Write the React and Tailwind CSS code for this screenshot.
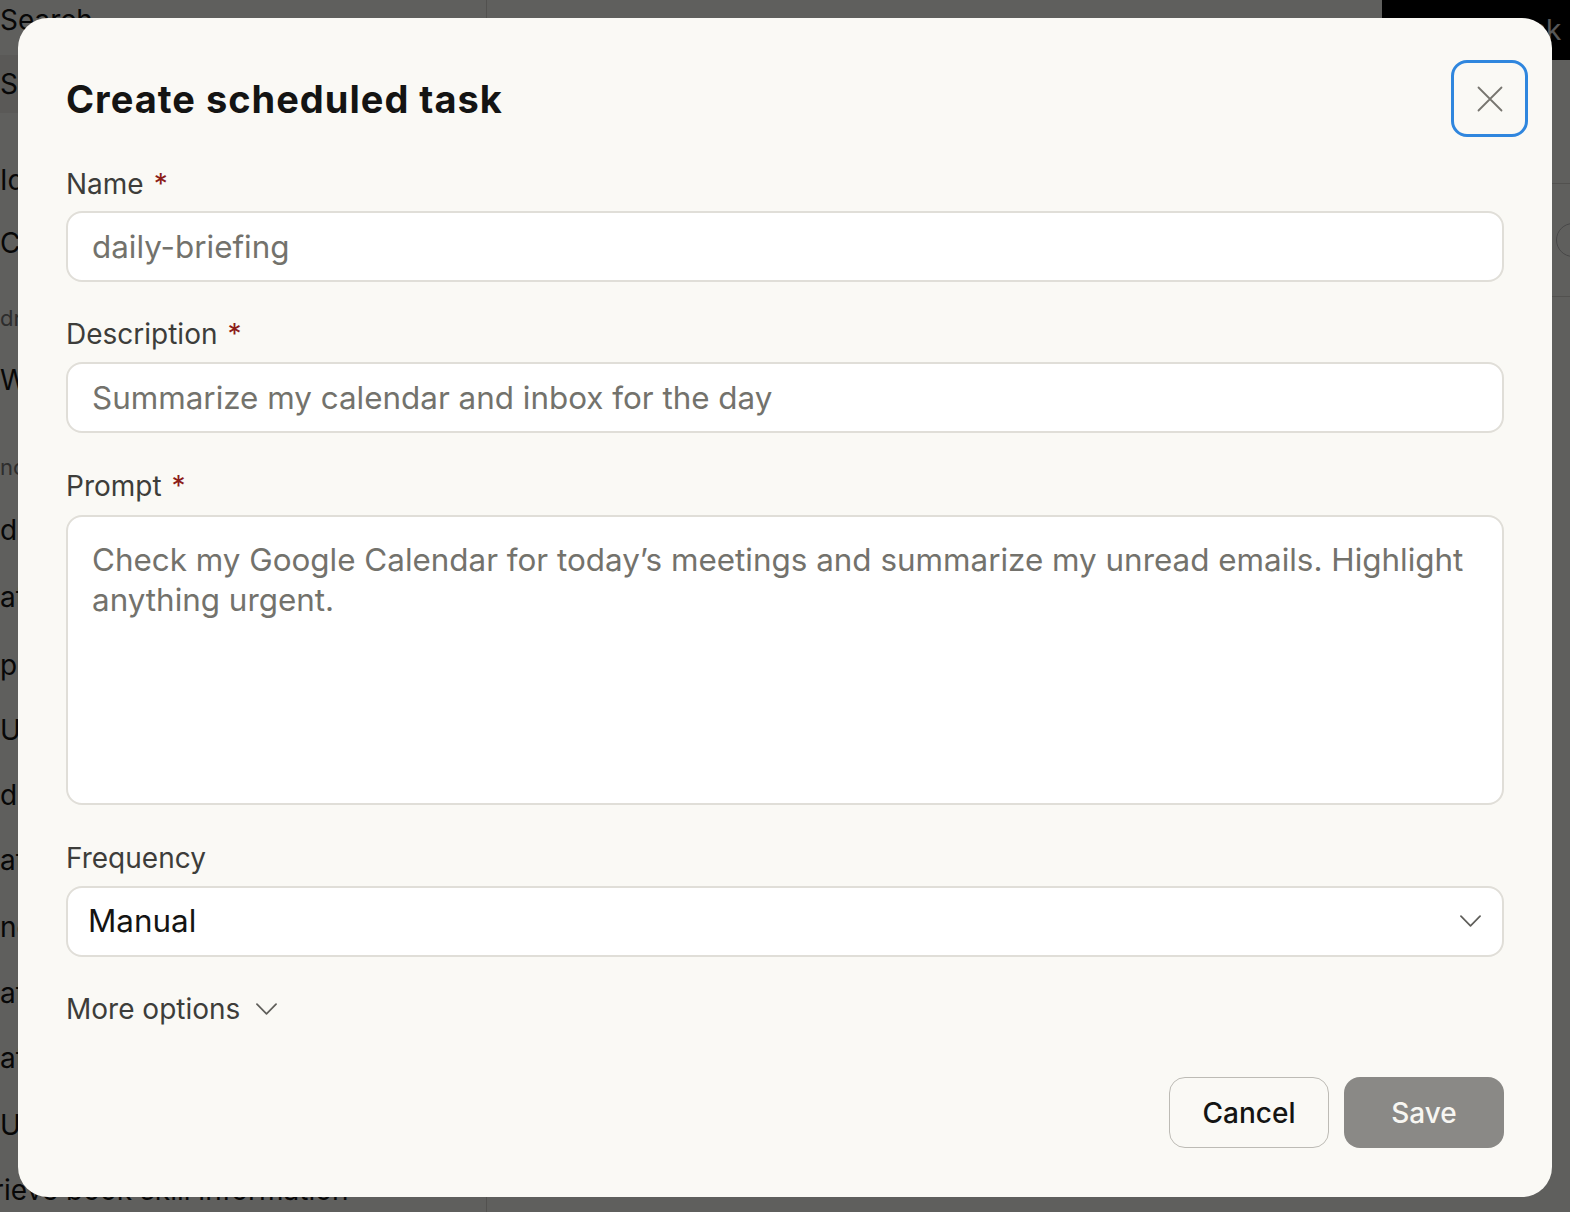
import React, { useState } from 'react'

// rows behind the overlay, heights chosen so the text lands where the app has it
const sidebarItems = [
    { text: 'Ideas', h: 'h-[63px]' },
    { text: 'Chats', h: 'h-[75px]' },
    { text: 'drafts', h: 'h-[62px]', small: true },
    { text: 'Weekly review', h: 'h-[87px]' },
    { text: 'notes', h: 'h-[63px]', small: true },
    { text: 'daily standup', h: 'h-[67px]' },
    { text: 'atlas cleanup', h: 'h-[68px]' },
    { text: ' plan trip', h: 'h-[65px]' },
    { text: 'Update docs', h: 'h-[65px]' },
    { text: 'draft reply', h: 'h-[65px]' },
    { text: 'ats report', h: 'h-[67px]' },
    { text: 'newsletter', h: 'h-[66px]' },
    { text: 'at summary', h: 'h-[65px]' },
    { text: 'at review', h: 'h-[67px]' },
    { text: 'Update tasks', h: 'h-[65px]' },
]

const Label = ({ children, required }) => (
    <label className="block text-[28px] leading-[36px] text-[#3d3d3a]">
        {children}
        {required && <span className="ml-[10px] text-[#8c1d18]">*</span>}
    </label>
)

const Chevron = ({ className }) => (
    <svg className={className} viewBox="0 0 22 12" fill="none" stroke="currentColor" strokeWidth="1.8" strokeLinecap="round" strokeLinejoin="round">
        <path d="M1 1l10 10L21 1" />
    </svg>
)

const App = () => {
    const [frequency, setFrequency] = useState('Manual')

    return (
        <div className="relative h-[1212px] w-full overflow-hidden bg-[#faf9f5] text-[#141413]" style={{ fontFamily: 'Inter, "Noto Sans", sans-serif' }}>
            {/* app behind the dialog */}
            <div className="flex h-full">
                <div className="w-[487px] shrink-0 border-r border-[#d8d6cf]">
                    <div className="h-[55px] text-[28px] leading-[36px] pt-[2px]">Search</div>
                    <div className="h-[58px] bg-[#ecebe5] flex items-center text-[28px]">Scheduled</div>
                    <div className="h-[49px]"></div>
                    {sidebarItems.map((item, i) => (
                        <div
                            key={i}
                            className={`${item.h} leading-[36px] ${item.small ? 'text-[22px] text-[#777]' : 'text-[28px]'}`}
                        >
                            {item.text}
                        </div>
                    ))}
                    <div className="-ml-[50px] text-[28px] leading-[36px] whitespace-nowrap">Retrieve book skill information</div>
                </div>
                <div className="flex-1 flex flex-col">
                    <div className="flex justify-end">
                        <div className="w-[188px] h-[60px] bg-black text-[#e8e8e8] text-[28px] flex items-center pl-[30px]">+ New task</div>
                    </div>
                    <div className="mt-[123px] h-[114px] border-t border-b border-[#d8d6cf] flex items-center justify-end">
                        <div className="w-[34px] h-[34px] rounded-full border border-[#bbb] mr-[-20px]"></div>
                    </div>
                </div>
            </div>

            {/* overlay */}
            <div className="absolute inset-0 bg-black/[0.62]"></div>

            {/* dialog */}
            <div className="absolute left-[18px] top-[18px] w-[1534px] h-[1179px] rounded-[30px] bg-[#faf9f5] px-[48px] pt-[42px] flex flex-col">
                <div className="flex items-center justify-between -mr-[24px]">
                    <h1 className="text-[38px] leading-[44px] font-bold tracking-[1px] text-[#141413]">Create scheduled task</h1>
                    <button className="w-[77px] h-[77px] rounded-[16px] border-[3px] border-[#2f86de] flex items-center justify-center text-[#77756f]">
                        <svg width="26" height="26" viewBox="0 0 26 26" fill="none" stroke="currentColor" strokeWidth="1.8" strokeLinecap="round">
                            <path d="M1.5 1.5l23 23M24.5 1.5l-23 23" />
                        </svg>
                    </button>
                </div>

                <div className="mt-[29px]">
                    <Label required>Name</Label>
                    <input
                        className="mt-[9px] w-full h-[71px] rounded-[16px] border-2 border-[#e0ded8] bg-white px-[24px] text-[31.4px] outline-none placeholder:text-[#73726c]"
                        placeholder="daily-briefing"
                    />
                </div>

                <div className="mt-[34px]">
                    <Label required>Description</Label>
                    <input
                        className="mt-[10px] w-full h-[71px] rounded-[16px] border-2 border-[#e0ded8] bg-white px-[24px] text-[31.4px] outline-none placeholder:text-[#73726c]"
                        placeholder="Summarize my calendar and inbox for the day"
                    />
                </div>

                <div className="mt-[35px]">
                    <Label required>Prompt</Label>
                    <textarea
                        className="mt-[11px] block w-full h-[290px] resize-none rounded-[16px] border-2 border-[#e0ded8] bg-white px-[24px] pt-[23px] text-[31.4px] leading-[40px] outline-none placeholder:text-[#73726c]"
                        placeholder="Check my Google Calendar for today’s meetings and summarize my unread emails. Highlight anything urgent."
                    />
                </div>

                <div className="mt-[35px]">
                    <Label>Frequency</Label>
                    <div className="relative mt-[10px]">
                        <select
                            value={frequency}
                            onChange={(e) => setFrequency(e.target.value)}
                            className="appearance-none w-full h-[71px] rounded-[16px] border-2 border-[#e0ded8] bg-white pl-[20px] pr-[60px] text-[31.4px] text-[#141413] outline-none"
                        >
                            <option>Manual</option>
                            <option>Hourly</option>
                            <option>Daily</option>
                            <option>Weekly</option>
                        </select>
                        <Chevron className="pointer-events-none absolute right-[23px] top-[29px] w-[21px] h-[12px] text-[#5f5e5a]" />
                    </div>
                </div>

                <button className="mt-[34px] self-start flex items-center gap-[16px] text-[28px] leading-[36px] text-[#3d3d3a]">
                    More options
                    <Chevron className="w-[21px] h-[12px] text-[#5f5e5a]" />
                </button>

                <div className="mt-[50px] flex justify-end gap-[15px]">
                    <button className="w-[160px] h-[71px] rounded-[16px] border border-[#bdbbb5] text-[28px] font-medium text-[#141413]">Cancel</button>
                    <button className="w-[160px] h-[71px] rounded-[16px] bg-[#8a8986] text-[28px] font-medium text-[#f7f6f2]">Save</button>
                </div>
            </div>
        </div>
    )
}

export default App
